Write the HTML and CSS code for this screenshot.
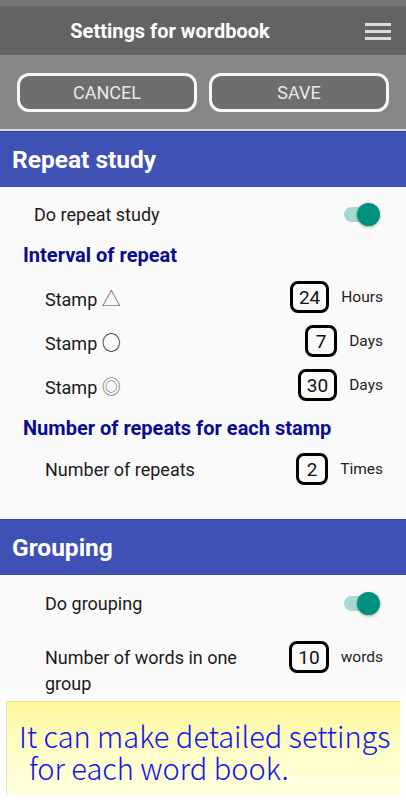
FILE: index.html
```html
<!DOCTYPE html>
<html>
<head>
<meta charset="utf-8">
<link rel="stylesheet" href="styles.css">
</head>
<body>
<div class="status"></div>
<header class="titlebar">
  <div class="title">Settings for wordbook</div>
  <div class="menu"><span></span><span></span><span></span></div>
</header>
<div class="actions">
  <button class="btn">CANCEL</button>
  <button class="btn">SAVE</button>
</div>
<main class="scroll">
  <div class="section">Repeat study</div>
  <div class="row row-toggle first">
    <span class="label">Do repeat study</span>
    <span class="switch"><span class="knob"></span></span>
  </div>
  <div class="sub">Interval of repeat</div>
  <div class="row item">
    <span class="label">Stamp <span class="sym">△</span></span>
    <span class="val"><span class="box">24</span><span class="unit">Hours</span></span>
  </div>
  <div class="row item">
    <span class="label">Stamp <span class="sym sym-o">○</span></span>
    <span class="val"><span class="box">7</span><span class="unit">Days</span></span>
  </div>
  <div class="row item">
    <span class="label">Stamp <span class="sym">◎</span></span>
    <span class="val"><span class="box">30</span><span class="unit">Days</span></span>
  </div>
  <div class="sub sub2">Number of repeats for each stamp</div>
  <div class="row item">
    <span class="label">Number of repeats</span>
    <span class="val"><span class="box">2</span><span class="unit">Times</span></span>
  </div>
  <div class="section sec2">Grouping</div>
  <div class="row row-toggle second">
    <span class="label">Do grouping</span>
    <span class="switch"><span class="knob"></span></span>
  </div>
  <div class="row item wrap">
    <span class="label">Number of words in one group</span>
    <span class="val"><span class="box">10</span><span class="unit">words</span></span>
  </div>
</main>
<div class="note">
  <p>It can make detailed settings</p>
  <p class="l2">for each word book.</p>
</div>
</body>
</html>
```

FILE: styles.css
```css
* { box-sizing: border-box; }
html, body { margin: 0; padding: 0; }
body {
  width: 406px;
  height: 800px;
  overflow: hidden;
  background: #ffffff;
  font-family: Roboto, "Liberation Sans", sans-serif;
  color: #1a1a1a;
}
.status { height: 6px; background: #767676; }
.titlebar {
  height: 49px;
  background: #636363;
  display: flex;
  align-items: center;
}
.title {
  width: 340px;
  text-align: center;
  color: #ffffff;
  font-weight: 700;
  font-size: 20px;
}
.menu {
  margin-left: 25px;
  display: flex;
  flex-direction: column;
  gap: 4px;
  margin-top: 2px;
}
.menu span {
  display: block;
  width: 26px;
  height: 3px;
  background: #dcdcdc;
}
.actions {
  height: 76px;
  background: #878787;
  border-bottom: 2px solid #d8d8d8;
  display: flex;
  gap: 12px;
  padding: 18px 17px 0 17px;
}
.btn {
  width: 180px;
  height: 39px;
  border: 3px solid #f6f6f6;
  border-radius: 12px;
  background: #6e6e6e;
  color: #e8e8e8;
  font-family: Roboto, "Liberation Sans", sans-serif;
  font-size: 18px;
  padding: 0;
}
.scroll {
  height: 564px;
  overflow: hidden;
  background: #fafafa;
}
.section {
  height: 56px;
  background: #3f51b5;
  color: #ffffff;
  font-weight: 700;
  font-size: 24.5px;
  display: flex;
  align-items: center;
  padding-left: 12px;
  border-top: 1px solid #3044a8;
}
.sec2 { margin-top: 28px; }
.row {
  display: flex;
  align-items: center;
  justify-content: space-between;
  padding-left: 45px;
  padding-right: 23px;
  font-size: 18px;
}
.row-toggle.first { height: 54px; padding-left: 34px; padding-right: 32px; }
.row-toggle.second { height: 56px; padding-right: 32px; }
.item { height: 44px; }
.sub {
  height: 28px;
  margin-bottom: 6px;
  padding-left: 23px;
  display: flex;
  align-items: center;
  color: #0a0a92;
  font-weight: 700;
  font-size: 20px;
}
.sub2 { margin-top: 7px; margin-bottom: 5px; }
.label { color: #1a1a1a; }
.sym {
  font-family: "Noto Sans CJK JP", sans-serif;
  font-weight: 300;
  font-size: 19px;
  color: #555;
}
.sym-o { font-weight: 500; color: #1a1a1a; }
.val { display: flex; align-items: center; }
.box {
  min-width: 32px;
  height: 32px;
  padding: 0 6px;
  border: 3px solid #000;
  border-radius: 8px;
  display: flex;
  align-items: center;
  justify-content: center;
  font-size: 19px;
  color: #111;
}
.unit {
  margin-left: 12px;
  font-size: 15.5px;
  color: #222;
}
.switch {
  position: relative;
  width: 30px;
  height: 15px;
  border-radius: 8px;
  background: #a7d9d3;
  display: block;
}
.knob {
  position: absolute;
  right: -6px;
  top: -4px;
  width: 23px;
  height: 23px;
  border-radius: 50%;
  background: #00917e;
  box-shadow: 0 1px 3px rgba(0,0,0,0.35);
}
.wrap {
  height: auto;
  align-items: flex-start;
  padding-top: 10px;
}
.wrap .label { width: 215px; line-height: 26px; margin-top: 4px; }
.note {
  margin: 6px 6px 0 6px;
  height: 94px;
  background: linear-gradient(180deg, #fdf89a 0%, #fffcc2 45%, #ffffe0 100%);
  border-top: 1px solid #e6e08a;
  border-left: 1px solid #e0e0d0;
  padding: 17px 0 0 12px;
  color: #0d14f2;
  font-family: "Noto Sans CJK JP", "Noto Sans", sans-serif;
  font-weight: 300;
  font-size: 29px;
}
.note p { margin: 0; line-height: 32px; height: 32px; white-space: nowrap; }
.note .l2 { padding-left: 10px; }
```
